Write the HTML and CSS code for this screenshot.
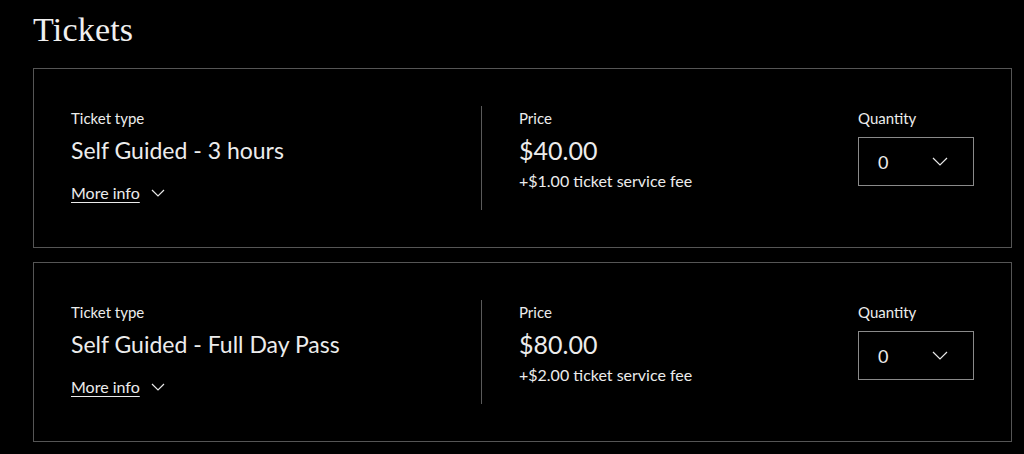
FILE: index.html
```html
<!DOCTYPE html>
<html lang="en">
<head>
<meta charset="utf-8">
<title>Tickets</title>
<link rel="stylesheet" href="styles.css">
</head>
<body>
<main class="page">
  <h1 class="title">Tickets</h1>
  <section class="card">
    <div class="col-type">
      <div class="label">Ticket type</div>
      <div class="name">Self Guided - 3 hours</div>
      <a class="more" href="#"><span class="more-text">More info</span>
        <svg class="chev" width="14" height="8" viewBox="0 0 14 8"><polyline points="1,1 7,7 13,1" fill="none" stroke="#e8e8e8" stroke-width="1.2"/></svg>
      </a>
    </div>
    <div class="divider"></div>
    <div class="col-price">
      <div class="label">Price</div>
      <div class="price">$40.00</div>
      <div class="fee">+$1.00 ticket service fee</div>
    </div>
    <div class="col-qty">
      <div class="label">Quantity</div>
      <div class="select"><span class="val">0</span>
        <svg class="chev" width="16" height="9" viewBox="0 0 16 9"><polyline points="1,1 8,8 15,1" fill="none" stroke="#e8e8e8" stroke-width="1.2"/></svg>
      </div>
    </div>
  </section>
  <section class="card">
    <div class="col-type">
      <div class="label">Ticket type</div>
      <div class="name">Self Guided - Full Day Pass</div>
      <a class="more" href="#"><span class="more-text">More info</span>
        <svg class="chev" width="14" height="8" viewBox="0 0 14 8"><polyline points="1,1 7,7 13,1" fill="none" stroke="#e8e8e8" stroke-width="1.2"/></svg>
      </a>
    </div>
    <div class="divider"></div>
    <div class="col-price">
      <div class="label">Price</div>
      <div class="price">$80.00</div>
      <div class="fee">+$2.00 ticket service fee</div>
    </div>
    <div class="col-qty">
      <div class="label">Quantity</div>
      <div class="select"><span class="val">0</span>
        <svg class="chev" width="16" height="9" viewBox="0 0 16 9"><polyline points="1,1 8,8 15,1" fill="none" stroke="#e8e8e8" stroke-width="1.2"/></svg>
      </div>
    </div>
  </section>
</main>
</body>
</html>
```
FILE: styles.css
```css
html, body {
  margin: 0;
  padding: 0;
  background: #000;
}
body {
  color: #ececec;
  font-family: "Lato", "Noto Sans", sans-serif;
}
.page {
  padding: 0 12px 0 33px;
}
.title {
  margin: 0;
  padding-top: 8px;
  height: 60px;
  font-family: "Liberation Serif", serif;
  font-weight: normal;
  font-size: 34px;
  line-height: 44px;
  color: #f0f0f0;
  letter-spacing: 0.2px;
}
.card {
  display: flex;
  align-items: stretch;
  border: 1px solid #555;
  padding: 37px 37px;
  height: 104px;
  margin-bottom: 14px;
}
.col-type {
  width: 410px;
}
.divider {
  width: 1px;
  background: #5a5a5a;
}
.col-price {
  flex: 1;
  padding-left: 37px;
}
.col-qty {
  width: 116px;
}
.label {
  font-size: 15px;
  line-height: 20px;
  padding-top: 2px;
}
.name {
  font-size: 23px;
  line-height: 30px;
  margin-top: 7px;
}
.more {
  display: inline-flex;
  align-items: center;
  gap: 11px;
  margin-top: 18px;
  color: #ececec;
  text-decoration: none;
  font-size: 16px;
  line-height: 20px;
}
.more-text {
  text-decoration: underline;
  text-underline-offset: 3px;
}
.price {
  font-size: 25px;
  line-height: 30px;
  margin-top: 7px;
}
.fee {
  font-size: 16px;
  line-height: 20px;
  margin-top: 6px;
}
.select {
  margin-top: 9px;
  box-sizing: border-box;
  height: 49px;
  border: 1px solid #8a8a8a;
  display: flex;
  align-items: center;
  justify-content: space-between;
  padding: 0 25px 0 19px;
  font-size: 18px;
}
```
